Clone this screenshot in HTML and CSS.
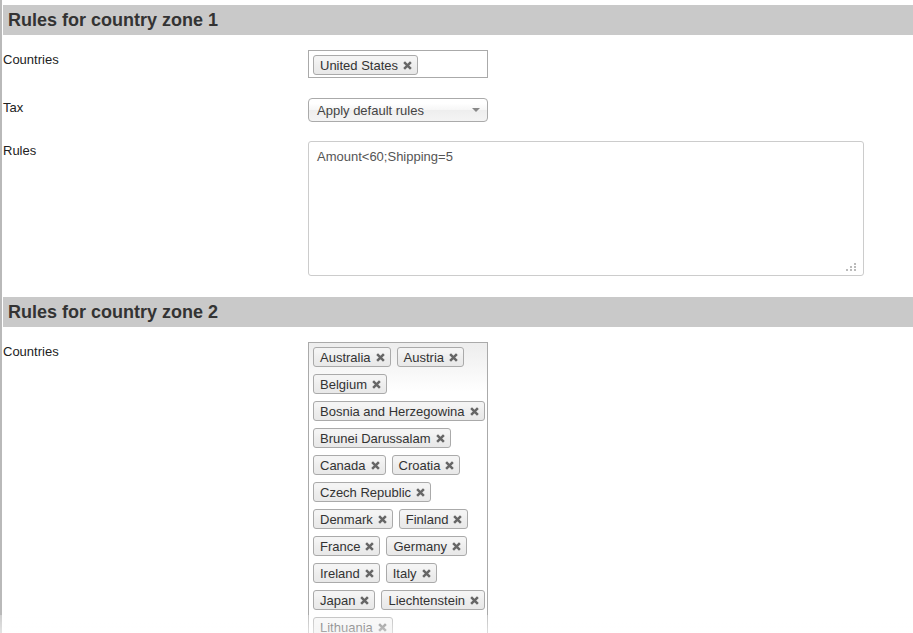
FILE: index.html
```html
<!DOCTYPE html>
<html lang="en">
<head>
  <meta charset="UTF-8">
  <title>Shipping rules</title>
  <link rel="stylesheet" href="styles.css">
</head>
<body>
  <div class="page">

    <h2 class="zone-title">Rules for country zone 1</h2>

    <div class="row row-first">
      <label class="field-label">Countries</label>
      <ul class="choices">
        <li class="tag">United States <svg class="x" viewBox="0 0 8 8"><path d="M1 1L7 7M7 1L1 7"/></svg></li>
      </ul>
    </div>

    <div class="row">
      <label class="field-label">Tax</label>
      <div class="select">
        <span>Apply default rules</span>
        <svg class="caret" viewBox="0 0 8 4"><path d="M0 0H8L4 4Z"/></svg>
      </div>
    </div>

    <div class="row">
      <label class="field-label">Rules</label>
      <div class="textarea">
        Amount&lt;60;Shipping=5
        <svg class="grip" viewBox="0 0 10 10">
          <rect x="8" y="2" width="2" height="2"/>
          <rect x="4" y="5" width="2" height="2"/>
          <rect x="8" y="5" width="2" height="2"/>
          <rect x="0" y="8" width="2" height="2"/>
          <rect x="4" y="8" width="2" height="2"/>
          <rect x="8" y="8" width="2" height="2"/>
        </svg>
      </div>
    </div>

    <h2 class="zone-title zone-next">Rules for country zone 2</h2>

    <div class="row row-first">
      <label class="field-label">Countries</label>
      <ul class="choices choices-long">
        <li class="tag">Australia <svg class="x" viewBox="0 0 8 8"><path d="M1 1L7 7M7 1L1 7"/></svg></li>
        <li class="tag">Austria <svg class="x" viewBox="0 0 8 8"><path d="M1 1L7 7M7 1L1 7"/></svg></li>
        <li class="tag">Belgium <svg class="x" viewBox="0 0 8 8"><path d="M1 1L7 7M7 1L1 7"/></svg></li>
        <li class="tag">Bosnia and Herzegowina <svg class="x" viewBox="0 0 8 8"><path d="M1 1L7 7M7 1L1 7"/></svg></li>
        <li class="tag">Brunei Darussalam <svg class="x" viewBox="0 0 8 8"><path d="M1 1L7 7M7 1L1 7"/></svg></li>
        <li class="tag">Canada <svg class="x" viewBox="0 0 8 8"><path d="M1 1L7 7M7 1L1 7"/></svg></li>
        <li class="tag">Croatia <svg class="x" viewBox="0 0 8 8"><path d="M1 1L7 7M7 1L1 7"/></svg></li>
        <li class="tag">Czech Republic <svg class="x" viewBox="0 0 8 8"><path d="M1 1L7 7M7 1L1 7"/></svg></li>
        <li class="tag">Denmark <svg class="x" viewBox="0 0 8 8"><path d="M1 1L7 7M7 1L1 7"/></svg></li>
        <li class="tag">Finland <svg class="x" viewBox="0 0 8 8"><path d="M1 1L7 7M7 1L1 7"/></svg></li>
        <li class="tag">France <svg class="x" viewBox="0 0 8 8"><path d="M1 1L7 7M7 1L1 7"/></svg></li>
        <li class="tag">Germany <svg class="x" viewBox="0 0 8 8"><path d="M1 1L7 7M7 1L1 7"/></svg></li>
        <li class="tag">Ireland <svg class="x" viewBox="0 0 8 8"><path d="M1 1L7 7M7 1L1 7"/></svg></li>
        <li class="tag">Italy <svg class="x" viewBox="0 0 8 8"><path d="M1 1L7 7M7 1L1 7"/></svg></li>
        <li class="tag">Japan <svg class="x" viewBox="0 0 8 8"><path d="M1 1L7 7M7 1L1 7"/></svg></li>
        <li class="tag">Liechtenstein <svg class="x" viewBox="0 0 8 8"><path d="M1 1L7 7M7 1L1 7"/></svg></li>
        <li class="tag">Lithuania <svg class="x" viewBox="0 0 8 8"><path d="M1 1L7 7M7 1L1 7"/></svg></li>
      </ul>
    </div>

  </div>

  <!-- bottom of the capture fades out -->
  <div class="fade-out"></div>
</body>
</html>
```

FILE: styles.css
```css
html, body {
  margin: 0;
  height: 100%;
  overflow: hidden;
  background: #fff;
}

body {
  font-family: "Liberation Sans", Arial, sans-serif;
  font-size: 13px;
  color: #222;
}

.page {
  min-height: 100%;
  border-left: 2px solid #b9b9b9;
  padding: 5px 0 0 1px;
}

.zone-title {
  margin: 0;
  height: 30px;
  line-height: 31px;
  padding-left: 5px;
  background-color: #c9c9c9;
  color: #333;
  font-size: 18px;
  font-weight: bold;
}

.zone-next {
  margin-top: 21px;
}

.row {
  display: grid;
  grid-template-columns: 305px 1fr;
  align-items: start;
  margin-top: 20px;
}

.row-first {
  margin-top: 15px;
}

.row:nth-of-type(3) {
  margin-top: 19px;
}

.field-label {
  line-height: 16px;
  padding-top: 2px;
}

/* multi select box */
.choices {
  list-style: none;
  margin: 0;
  padding: 4px 0 2px 4px;
  width: 174px;
  border: 1px solid #aaa;
  background: #fff;
  display: flex;
  flex-wrap: wrap;
  gap: 7px 6px;
}

.choices-long {
  height: 320px;
  align-content: flex-start;
  background-image: linear-gradient(#eee 1%, #fff 15%);
}

.tag {
  display: flex;
  align-items: center;
  height: 18px;
  padding: 0 5px 0 6px;
  border: 1px solid #aaa;
  border-radius: 3px;
  background-image: linear-gradient(#f4f4f4 20%, #eee 50%, #e8e8e8);
  color: #333;
  line-height: 13px;
  white-space: nowrap;
}

.x {
  width: 9px;
  height: 9px;
  margin-left: 5px;
  fill: none;
  stroke: #666;
  stroke-width: 2.2;
}

/* dropdown */
.select {
  width: 162px;
  height: 22px;
  padding: 0 8px;
  border: 1px solid #aaa;
  border-radius: 4px;
  background-image: linear-gradient(#fff 20%, #f6f6f6 50%, #eee 52%, #f4f4f4);
  display: flex;
  align-items: center;
  justify-content: space-between;
  color: #444;
}

.caret {
  width: 8px;
  height: 4px;
  margin-right: -1px;
  fill: #888;
}

/* rules textarea */
.textarea {
  position: relative;
  width: 538px;
  height: 119px;
  padding: 7px 8px;
  border: 1px solid #ccc;
  border-radius: 3px;
  color: #555;
  line-height: 16px;
}

.grip {
  position: absolute;
  right: 7px;
  bottom: 4px;
  width: 10px;
  height: 10px;
  fill: #bbb;
}

.fade-out {
  position: fixed;
  left: 0;
  right: 0;
  bottom: 0;
  height: 18px;
  background: linear-gradient(rgba(255, 255, 255, 0.3), rgba(255, 255, 255, 0.6));
}
```
